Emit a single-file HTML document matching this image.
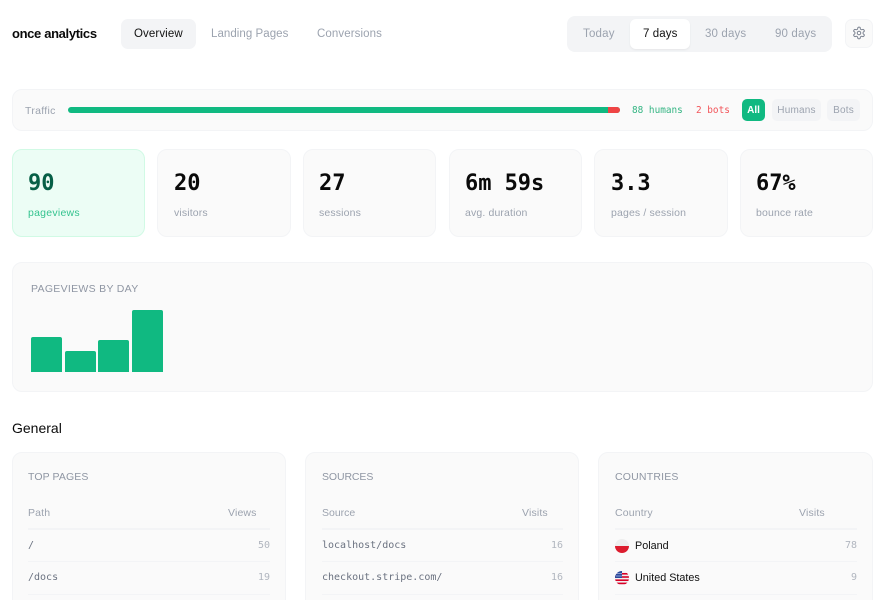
<!DOCTYPE html>
<html lang="en">
<head>
<meta charset="utf-8">
<title>once analytics</title>
<style>
html,body{margin:0;padding:0;width:884px;height:600px;overflow:hidden;background:#fff}
body{position:relative;font-family:"Liberation Sans",sans-serif;color:#111}
.b{position:absolute;box-sizing:border-box}
.t{position:absolute;white-space:nowrap;line-height:16px;height:16px;margin-top:1px}
.m{font-family:"DejaVu Sans Mono","Liberation Mono",monospace}
.card{position:absolute;box-sizing:border-box;background:#fafafa;border:1px solid #f3f4f6;border-radius:10px}
.g{color:#9ca3af}
.num{font-family:"DejaVu Sans Mono","Liberation Mono",monospace;font-weight:700;font-size:22px;line-height:28px;height:28px;top:170px;position:absolute;white-space:nowrap;color:#0a0a0a;letter-spacing:-.05px}
.lab{font-size:10.5px;color:#9ca3af;top:204px;letter-spacing:.14px}
.tt{font-size:10.5px;color:#8f96a3;font-weight:400}
.th{font-size:10.5px;color:#9ca3af;top:504px;letter-spacing:.15px}
.l1{position:absolute;height:2px;top:528px;background:#f3f4f6}
.l2{position:absolute;height:1px;background:#f3f4f6}
.r{font-size:10px;color:#6b7280;letter-spacing:0}
.v{font-size:10px;color:#b1b6bf;text-align:right}
.c{font-size:10.8px;color:#111}
</style>
</head>
<body>
<span class="t" style="left:12px;top:25px;font-size:13px;font-weight:700;color:#0a0a0a;letter-spacing:-.35px">once analytics</span>

<div class="b" style="left:121px;top:19px;width:75px;height:30px;background:#f3f4f6;border-radius:7px"></div>
<span class="t" style="left:134px;top:25px;font-size:11.5px;color:#111;letter-spacing:.1px">Overview</span>
<span class="t g" style="left:211px;top:25px;font-size:11.5px;letter-spacing:.05px">Landing Pages</span>
<span class="t g" style="left:317px;top:25px;font-size:11.5px;letter-spacing:.1px">Conversions</span>

<div class="b" style="left:567px;top:16px;width:265px;height:36px;background:#f3f4f6;border-radius:8px"></div>
<div class="b" style="left:630px;top:19px;width:60px;height:30px;background:#fff;border-radius:6px;box-shadow:0 1px 2px rgba(0,0,0,.06)"></div>
<span class="t g" style="left:583px;top:25px;font-size:11.5px;letter-spacing:.2px">Today</span>
<span class="t" style="left:643px;top:25px;font-size:11.5px;color:#111;letter-spacing:.1px">7 days</span>
<span class="t g" style="left:705px;top:25px;font-size:11.5px;letter-spacing:.15px">30 days</span>
<span class="t g" style="left:775px;top:25px;font-size:11.5px;letter-spacing:.15px">90 days</span>

<div class="b" style="left:845px;top:19px;width:28px;height:29px;background:#fafafa;border:1px solid #f3f4f6;border-radius:7px"></div>
<svg style="position:absolute;left:852px;top:26px" width="14" height="14" viewBox="0 0 24 24" fill="none" stroke="#7b8290" stroke-width="1.7" stroke-linecap="round" stroke-linejoin="round"><path d="M12.22 2h-.44a2 2 0 0 0-2 2v.18a2 2 0 0 1-1 1.73l-.43.25a2 2 0 0 1-2 0l-.15-.08a2 2 0 0 0-2.73.73l-.22.38a2 2 0 0 0 .73 2.73l.15.1a2 2 0 0 1 1 1.72v.51a2 2 0 0 1-1 1.74l-.15.09a2 2 0 0 0-.73 2.73l.22.38a2 2 0 0 0 2.73.73l.15-.08a2 2 0 0 1 2 0l.43.25a2 2 0 0 1 1 1.73V20a2 2 0 0 0 2 2h.44a2 2 0 0 0 2-2v-.18a2 2 0 0 1 1-1.73l.43-.25a2 2 0 0 1 2 0l.15.08a2 2 0 0 0 2.73-.73l.22-.39a2 2 0 0 0-.73-2.73l-.15-.08a2 2 0 0 1-1-1.74v-.5a2 2 0 0 1 1-1.74l.15-.09a2 2 0 0 0 .73-2.73l-.22-.38a2 2 0 0 0-2.73-.73l-.15.08a2 2 0 0 1-2 0l-.43-.25a2 2 0 0 1-1-1.73V4a2 2 0 0 0-2-2z"/><circle cx="12" cy="12" r="3"/></svg>

<div class="card" style="left:12px;top:89px;width:861px;height:42px"></div>
<span class="t g" style="left:25px;top:102px;font-size:10.5px;letter-spacing:.3px">Traffic</span>
<div class="b" style="left:68px;top:107px;width:552px;height:6px;background:#10b981;border-radius:3px;overflow:hidden"><div style="position:absolute;left:540px;top:0;width:12px;height:6px;background:#ef4444"></div></div>
<span class="t m" style="left:632px;top:102px;font-size:9.4px;color:#34b583">88 humans</span>
<span class="t m" style="left:696px;top:102px;font-size:9.4px;color:#f2555a">2 bots</span>
<div class="b" style="left:742px;top:99px;width:23px;height:22px;background:#10b981;border-radius:5px"></div>
<span class="t" style="left:742px;width:23px;text-align:center;top:102px;font-size:10px;font-weight:700;color:#fff">All</span>
<div class="b" style="left:772px;top:99px;width:49px;height:22px;background:#f3f4f6;border-radius:5px"></div>
<span class="t g" style="left:772px;width:49px;text-align:center;top:102px;font-size:10px;letter-spacing:.2px">Humans</span>
<div class="b" style="left:827px;top:99px;width:33px;height:22px;background:#f3f4f6;border-radius:5px"></div>
<span class="t g" style="left:827px;width:33px;text-align:center;top:102px;font-size:10px;letter-spacing:.2px">Bots</span>

<div class="card" style="left:12px;top:149px;width:133px;height:87.5px;background:#ecfdf5;border-color:#d1fae5"></div>
<div class="card" style="left:157px;top:149px;width:134px;height:87.5px"></div>
<div class="card" style="left:303px;top:149px;width:133px;height:87.5px"></div>
<div class="card" style="left:449px;top:149px;width:133px;height:87.5px"></div>
<div class="card" style="left:594px;top:149px;width:134px;height:87.5px"></div>
<div class="card" style="left:740px;top:149px;width:133px;height:87.5px"></div>

<span class="num" style="left:28px;color:#065f46">90</span>
<span class="num" style="left:174px">20</span>
<span class="num" style="left:319px">27</span>
<span class="num" style="left:465px">6m 59s</span>
<span class="num" style="left:611px">3.3</span>
<span class="num" style="left:756px">67%</span>
<span class="t lab" style="left:28px;color:#34c38f;letter-spacing:.25px">pageviews</span>
<span class="t lab" style="left:174px">visitors</span>
<span class="t lab" style="left:319px">sessions</span>
<span class="t lab" style="left:465px">avg. duration</span>
<span class="t lab" style="left:611px">pages / session</span>
<span class="t lab" style="left:756px">bounce rate</span>

<div class="card" style="left:12px;top:262px;width:861px;height:130px"></div>
<span class="t tt" style="left:31px;top:280px;letter-spacing:.3px">PAGEVIEWS BY DAY</span>
<div class="b" style="left:31px;top:337px;width:31px;height:35px;background:#10b981;border-radius:2px 2px 0 0"></div>
<div class="b" style="left:65px;top:351px;width:31px;height:21px;background:#10b981;border-radius:2px 2px 0 0"></div>
<div class="b" style="left:98px;top:340px;width:31px;height:32px;background:#10b981;border-radius:2px 2px 0 0"></div>
<div class="b" style="left:132px;top:310px;width:31px;height:62px;background:#10b981;border-radius:2px 2px 0 0"></div>

<span class="t" style="left:12px;top:419px;font-size:14px;color:#0a0a0a">General</span>

<div class="card" style="left:12px;top:452px;width:274px;height:200px"></div>
<div class="card" style="left:305px;top:452px;width:274px;height:200px"></div>
<div class="card" style="left:598px;top:452px;width:275px;height:200px"></div>

<span class="t tt" style="left:28px;top:468px;letter-spacing:.1px">TOP PAGES</span>
<span class="t th" style="left:28px">Path</span>
<span class="t th" style="left:228px">Views</span>
<div class="l1" style="left:28px;width:242px"></div>
<span class="t r m" style="left:28px;top:537px">/</span>
<span class="t v m" style="left:230px;width:40px;top:537px">50</span>
<div class="l2" style="left:28px;width:242px;top:561px"></div>
<span class="t r m" style="left:28px;top:569px">/docs</span>
<span class="t v m" style="left:230px;width:40px;top:569px">19</span>
<div class="l2" style="left:28px;width:242px;top:594px"></div>

<span class="t tt" style="left:322px;top:468px;letter-spacing:-.1px">SOURCES</span>
<span class="t th" style="left:322px;letter-spacing:0">Source</span>
<span class="t th" style="left:522px">Visits</span>
<div class="l1" style="left:322px;width:241px"></div>
<span class="t r m" style="left:322px;top:537px">localhost/docs</span>
<span class="t v m" style="left:523px;width:40px;top:537px">16</span>
<div class="l2" style="left:322px;width:241px;top:561px"></div>
<span class="t r m" style="left:322px;top:569px">checkout.stripe.com/</span>
<span class="t v m" style="left:523px;width:40px;top:569px">16</span>
<div class="l2" style="left:322px;width:241px;top:594px"></div>

<span class="t tt" style="left:615px;top:468px;letter-spacing:.2px">COUNTRIES</span>
<span class="t th" style="left:615px">Country</span>
<span class="t th" style="left:799px">Visits</span>
<div class="l1" style="left:615px;width:242px"></div>
<svg style="position:absolute;left:615px;top:539px" width="14" height="14" viewBox="0 0 14 14"><clipPath id="c1"><circle cx="7" cy="7" r="7"/></clipPath><g clip-path="url(#c1)"><rect width="14" height="7" fill="#eeeeee"/><rect y="7" width="14" height="7" fill="#dc1c2e"/></g></svg>
<span class="t c" style="left:635px;top:537px">Poland</span>
<span class="t v m" style="left:817px;width:40px;top:537px">78</span>
<div class="l2" style="left:615px;width:242px;top:561px"></div>
<svg style="position:absolute;left:615px;top:571px" width="14" height="14" viewBox="0 0 14 14"><clipPath id="c2"><circle cx="7" cy="7" r="7"/></clipPath><g clip-path="url(#c2)"><rect width="14" height="14" fill="#f0f0f0"/><rect y="2" width="14" height="1.6" fill="#d80027"/><rect y="5.2" width="14" height="1.6" fill="#d80027"/><rect y="8.4" width="14" height="1.6" fill="#d80027"/><rect y="11.6" width="14" height="1.6" fill="#d80027"/><rect width="7" height="7" fill="#2a4a9c"/><g fill="#eef"><rect x="1.5" y="2" width="1" height="1"/><rect x="3.5" y="2" width="1" height="1"/><rect x="5.5" y="2" width="1" height="1"/><rect x="1.5" y="4.5" width="1" height="1"/><rect x="3.5" y="4.5" width="1" height="1"/><rect x="5.5" y="4.5" width="1" height="1"/></g></g></svg>
<span class="t c" style="left:635px;top:569px">United States</span>
<span class="t v m" style="left:817px;width:40px;top:569px">9</span>
<div class="l2" style="left:615px;width:242px;top:594px"></div>
</body>
</html>
